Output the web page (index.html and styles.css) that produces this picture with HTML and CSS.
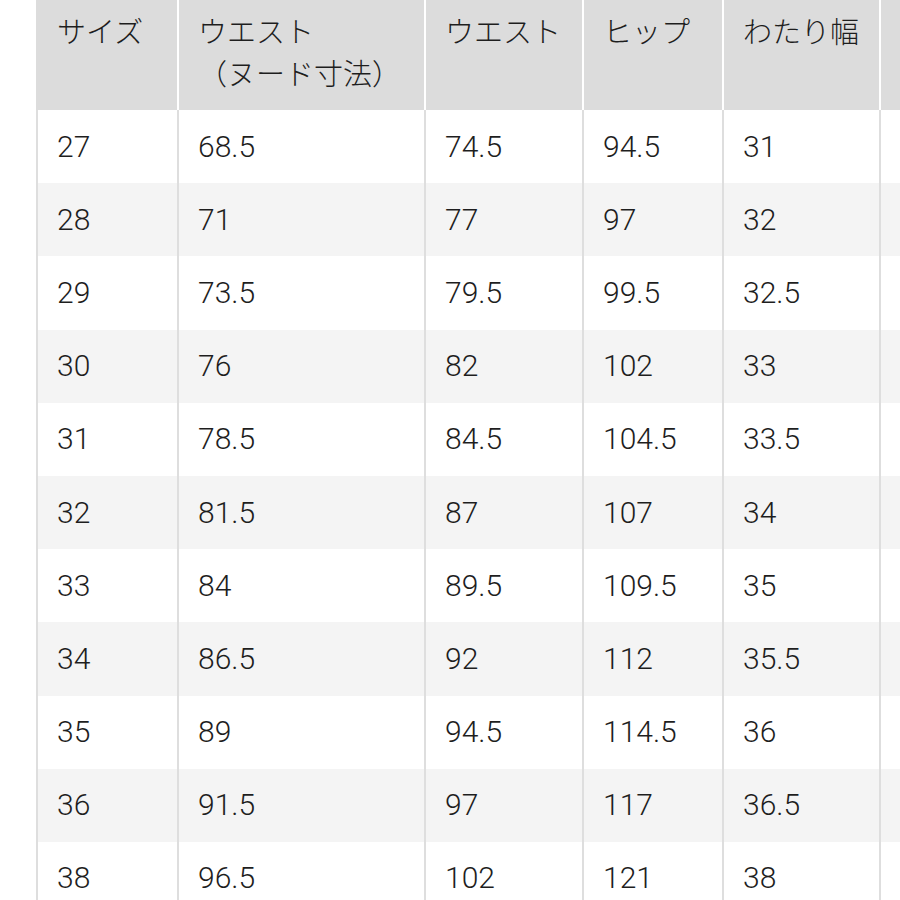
FILE: index.html
```html
<!DOCTYPE html>
<html lang="ja">
<head>
<meta charset="utf-8">
<link rel="stylesheet" href="styles.css">
</head>
<body>
<div class="wrap">
<table class="size-table">
<colgroup>
<col class="c1"><col class="c2"><col class="c3"><col class="c4"><col class="c5"><col class="c6">
</colgroup>
<thead>
<tr>
<th>サイズ</th>
<th>ウエスト<br>（ヌード寸法）</th>
<th>ウエスト</th>
<th>ヒップ</th>
<th>わたり幅</th>
<th></th>
</tr>
</thead>
<tbody>
<tr><td>27</td><td>68.5</td><td>74.5</td><td>94.5</td><td>31</td><td></td></tr>
<tr><td>28</td><td>71</td><td>77</td><td>97</td><td>32</td><td></td></tr>
<tr><td>29</td><td>73.5</td><td>79.5</td><td>99.5</td><td>32.5</td><td></td></tr>
<tr><td>30</td><td>76</td><td>82</td><td>102</td><td>33</td><td></td></tr>
<tr><td>31</td><td>78.5</td><td>84.5</td><td>104.5</td><td>33.5</td><td></td></tr>
<tr><td>32</td><td>81.5</td><td>87</td><td>107</td><td>34</td><td></td></tr>
<tr><td>33</td><td>84</td><td>89.5</td><td>109.5</td><td>35</td><td></td></tr>
<tr><td>34</td><td>86.5</td><td>92</td><td>112</td><td>35.5</td><td></td></tr>
<tr><td>35</td><td>89</td><td>94.5</td><td>114.5</td><td>36</td><td></td></tr>
<tr><td>36</td><td>91.5</td><td>97</td><td>117</td><td>36.5</td><td></td></tr>
<tr><td>38</td><td>96.5</td><td>102</td><td>121</td><td>38</td><td></td></tr>
</tbody>
</table>
</div>
</body>
</html>
```

FILE: styles.css
```css
html, body {
  margin: 0;
  padding: 0;
  background: #ffffff;
}
body {
  width: 900px;
  height: 900px;
  overflow: hidden;
}
.wrap {
  padding-left: 36px;
  width: 1100px;
}
.size-table {
  border-collapse: separate;
  border-spacing: 0;
  table-layout: fixed;
  width: 1043px;
  font-family: "Roboto", "Noto Sans CJK JP", sans-serif;
  font-weight: 300;
  color: #1e1e1e;
}
.c1 { width: 141px; }
.c2 { width: 247px; }
.c3 { width: 158px; }
.c4 { width: 140px; }
.c5 { width: 157px; }
.c6 { width: 200px; }
.size-table th {
  background: #dcdcdc;
  border-left: 2px solid #ffffff;
  text-align: left;
  vertical-align: top;
  font-weight: 300;
  font-size: 29px;
  line-height: 42px;
  height: 84px;
  padding: 12px 10px 14px 19px;
  white-space: nowrap;
}
.size-table th:first-child {
  border-left-color: #dcdcdc;
}
.size-table td {
  border-left: 2px solid #dedede;
  height: 73.2px;
  padding: 0 10px 0 19px;
  font-size: 30px;
  line-height: 34px;
  vertical-align: middle;
  box-sizing: border-box;
}
.size-table tbody tr:nth-child(even) td {
  background: #f4f4f4;
}
```
